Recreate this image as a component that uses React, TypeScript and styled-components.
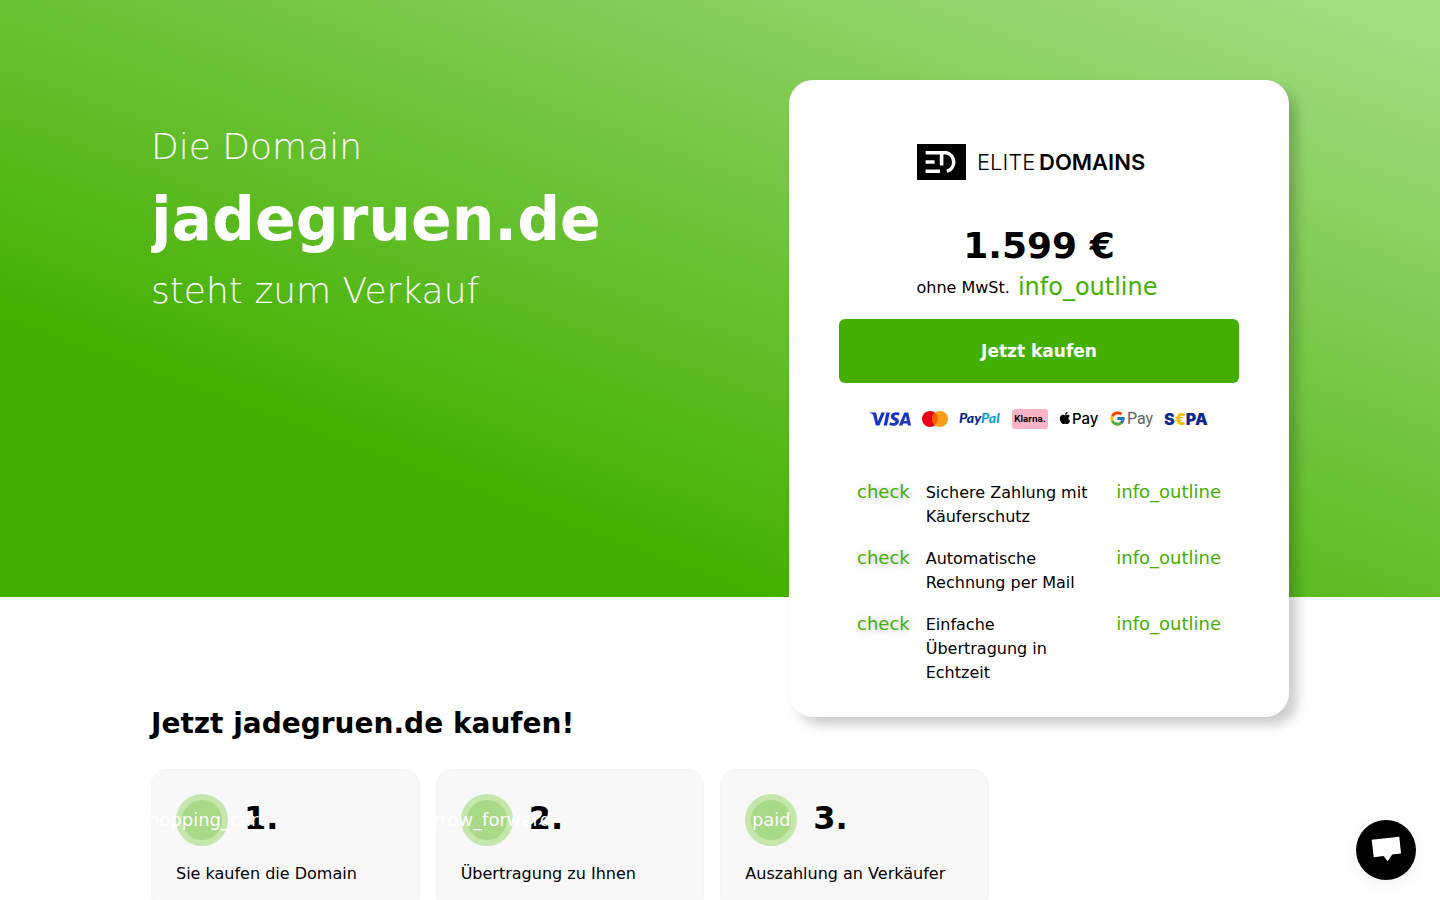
import React from 'react';
import styled, { createGlobalStyle } from 'styled-components';
import { SiVisa } from 'react-icons/si';
import { FaApple } from 'react-icons/fa';
import { FcGoogle } from 'react-icons/fc';

const green = '#43b000';

const GlobalStyle = createGlobalStyle`
  *, *::before, *::after { box-sizing: border-box; }
  body {
    margin: 0;
    background: #fff;
    color: #000;
    font-family: "DejaVu Sans", sans-serif;
    font-size: 16px;
    line-height: 24px;
  }
  h1, h2, h3, p, ul, ol { margin: 0; padding: 0; }
`;

const Container = styled.div`
  width: 100%;
  max-width: 1138px;
  margin: 0 auto;
`;

const Hero = styled.header`
  padding-top: 80px;
  background: linear-gradient(200deg, #a2db80 5%, ${green} 75%);
`;

const HeroInner = styled(Container)`
  display: flex;
  justify-content: space-between;
  align-items: flex-start;
`;

const Headline = styled.h1`
  padding-top: 31px;
  overflow: hidden;
  color: #fff;
  line-height: 72px;
`;

const HeadlineLine = styled.span<{ $strong?: boolean }>`
  display: block;
  font-size: ${(p) => (p.$strong ? '60px' : '36px')};
  font-weight: ${(p) => (p.$strong ? 700 : 200)};
`;

const OfferCard = styled.aside`
  position: relative;
  z-index: 1;
  display: flex;
  flex-direction: column;
  flex: 0 0 500px;
  margin-bottom: -120px;
  padding: 64px 50px 32px;
  border-radius: 24px;
  background: #fff;
  box-shadow: 8px 8px 12px rgba(0, 0, 0, 0.2);
`;

const LogoLink = styled.a`
  display: block;
  align-self: center;
  height: 36px;
  color: #000;
`;

const Price = styled.p`
  margin-top: 42px;
  font-size: 36px;
  font-weight: 700;
  line-height: 48px;
  text-align: center;
`;

const TaxNote = styled.p`
  display: flex;
  justify-content: center;
  align-items: center;
  gap: 8px;
  height: 34px;
  padding-right: 4px;
`;

const TaxLabel = styled.span`
  padding-top: 2px;
`;

const IconName = styled.span<{ $size?: number }>`
  color: ${green};
  font-size: ${(p) => p.$size ?? 18}px;
  white-space: nowrap;
`;

const CheckMark = styled(IconName)`
  text-shadow: 0 1px 8px rgba(0, 0, 0, 0.28);
`;

const BuyButton = styled.button`
  height: 64px;
  margin-top: 15px;
  border: 0;
  border-radius: 6px;
  background: ${green};
  color: #fff;
  font-family: inherit;
  font-size: 17px;
  font-weight: 700;
  cursor: pointer;
`;

const Payments = styled.ul`
  display: flex;
  justify-content: center;
  align-items: center;
  gap: 11px;
  height: 22px;
  margin-top: 25px;
  list-style: none;

  li, svg { display: block; }
`;

const Benefits = styled.ul`
  display: flex;
  flex-direction: column;
  gap: 17px;
  margin-top: 50px;
  padding: 0 18px;
  list-style: none;
`;

const Benefit = styled.li`
  display: flex;
  align-items: baseline;
  gap: 16px;
`;

const BenefitText = styled.span`
  flex: 1;
`;

const StepsSection = styled(Container)`
  padding: 109px 0 80px;
`;

const SectionTitle = styled.h2`
  font-size: 28px;
  font-weight: 700;
  line-height: 36px;
`;

const Steps = styled.ol`
  display: grid;
  grid-template-columns: repeat(3, 1fr);
  gap: 16px;
  width: 838px;
  max-width: 100%;
  margin-top: 27px;
  list-style: none;
`;

const Step = styled.li`
  padding: 24px;
  border: 1px solid #f5f5f5;
  border-radius: 16px;
  background: #f8f8f8;
`;

const StepHead = styled.div`
  display: flex;
  align-items: flex-start;
  gap: 16px;
  height: 52px;
`;

const StepIcon = styled.span`
  position: relative;
  display: flex;
  justify-content: center;
  align-items: center;
  width: 52px;
  height: 52px;
  border: 6px solid #c5e7ae;
  border-radius: 50%;
  background: #a7d986;
  color: #fff;
  font-size: 18px;
  white-space: nowrap;
`;

const StepNumber = styled.h3`
  font-size: 32px;
  font-weight: 700;
  line-height: 48px;
`;

const StepText = styled.p`
  margin-top: 16px;
`;

const ChatButton = styled.button`
  position: fixed;
  right: 24px;
  bottom: 20px;
  z-index: 2;
  width: 60px;
  height: 60px;
  padding: 0;
  border: 0;
  border-radius: 50%;
  background: #000;
  box-shadow: 0 4px 16px rgba(0, 0, 0, 0.06);
  cursor: pointer;

  svg { display: block; }
`;

const Logo = () => (
  <svg width="244" height="36" viewBox="0 0 244 36" role="img" aria-label="ELITEDOMAINS">
    <rect width="49" height="36" />
    <g fill="none" stroke="#fff" strokeWidth="3.6">
      <path d="M8.6 8.8H29.5a9.6 9.6 0 0 1 .4 18.5" />
      <path d="M8.6 18H17.6M8.6 27.2H23M24.6 8.8V21.4" />
    </g>
    <g fontFamily="Inter, sans-serif" fontSize="22">
      <text x="60" y="26" fontWeight="300">ELITE</text>
      <text x="122" y="26" fontWeight="600">DOMAINS</text>
    </g>
  </svg>
);

const Mastercard = () => (
  <svg width="26" height="16" viewBox="0 0 26 16" role="img" aria-label="Mastercard">
    <circle cx="8" cy="8" r="8" fill="#eb001b" />
    <circle cx="18" cy="8" r="8" fill="#f79e1b" />
    <path d="M13 1.8a8 8 0 0 1 0 12.4 8 8 0 0 1 0-12.4z" fill="#ff5f00" />
  </svg>
);

const PayPal = () => (
  <svg width="42" height="20" viewBox="0 0 42 20">
    <text x="0" y="14" fontFamily="Lato, sans-serif" fontSize="14" fontWeight="900" fontStyle="italic" fill="#002991">
      Pay<tspan fill="#0a9ee0">Pal</tspan>
    </text>
  </svg>
);

const Klarna = () => (
  <svg width="36" height="20" viewBox="0 0 36 20">
    <rect width="36" height="20" rx="3" fill="#ffb3c7" />
    <text x="18" y="13" textAnchor="middle" fontFamily="Inter, sans-serif" fontSize="9" fontWeight="700">Klarna.</text>
  </svg>
);

const ApplePay = () => (
  <svg width="40" height="20" viewBox="0 0 40 20">
    <FaApple x="-1" y="2" size={14} />
    <text x="13" y="15" fontFamily="Inter, sans-serif" fontSize="15" fontWeight="500">Pay</text>
  </svg>
);

const GooglePay = () => (
  <svg width="43" height="20" viewBox="0 0 43 20">
    <FcGoogle x="-1" y="1" size={17} />
    <text x="17" y="15" fontFamily="Roboto, sans-serif" fontSize="16" fill="#5f6368">Pay</text>
  </svg>
);

const Sepa = () => (
  <svg width="46" height="20" viewBox="0 0 46 20">
    <text x="0" y="16" fontFamily="Inter, sans-serif" fontSize="16" fontWeight="900" fill="#10298e">
      S<tspan fill="#ffbe00">€</tspan>PA
    </text>
  </svg>
);

const benefits = [
  'Sichere Zahlung mit Käuferschutz',
  'Automatische Rechnung per Mail',
  'Einfache Übertragung in Echtzeit',
];

const steps = [
  { icon: 'shopping_cart', text: 'Sie kaufen die Domain' },
  { icon: 'arrow_forward', text: 'Übertragung zu Ihnen' },
  { icon: 'paid', text: 'Auszahlung an Verkäufer' },
];

export default function App() {
  return (
    <>
      <GlobalStyle />
      <Hero>
        <HeroInner>
          <Headline>
            <HeadlineLine>Die Domain</HeadlineLine>
            <HeadlineLine $strong>jadegruen.de</HeadlineLine>
            <HeadlineLine>steht zum Verkauf</HeadlineLine>
          </Headline>
          <OfferCard>
            <LogoLink href="#"><Logo /></LogoLink>
            <Price>1.599 €</Price>
            <TaxNote>
              <TaxLabel>ohne MwSt.</TaxLabel>
              <IconName $size={24}>info_outline</IconName>
            </TaxNote>
            <BuyButton type="button">Jetzt kaufen</BuyButton>
            <Payments>
              <li><SiVisa size={42} color="#1a34c8" title="Visa" /></li>
              <li><Mastercard /></li>
              <li><PayPal /></li>
              <li><Klarna /></li>
              <li><ApplePay /></li>
              <li><GooglePay /></li>
              <li><Sepa /></li>
            </Payments>
            <Benefits>
              {benefits.map((text) => (
                <Benefit key={text}>
                  <CheckMark>check</CheckMark>
                  <BenefitText>{text}</BenefitText>
                  <IconName>info_outline</IconName>
                </Benefit>
              ))}
            </Benefits>
          </OfferCard>
        </HeroInner>
      </Hero>
      <StepsSection as="main">
        <SectionTitle>Jetzt jadegruen.de kaufen!</SectionTitle>
        <Steps>
          {steps.map((step, i) => (
            <Step key={step.icon}>
              <StepHead>
                <StepIcon>{step.icon}</StepIcon>
                <StepNumber>{i + 1}.</StepNumber>
              </StepHead>
              <StepText>{step.text}</StepText>
            </Step>
          ))}
        </Steps>
      </StepsSection>
      <ChatButton type="button" aria-label="Chat">
        <svg width="60" height="60" viewBox="0 0 60 60" fill="#fff">
          <path d="M15.7 19.8 43.3 16.7 45 33.6 36.2 34.6 31.7 41.3 27.5 36 17.7 37.2z" />
        </svg>
      </ChatButton>
    </>
  );
}
